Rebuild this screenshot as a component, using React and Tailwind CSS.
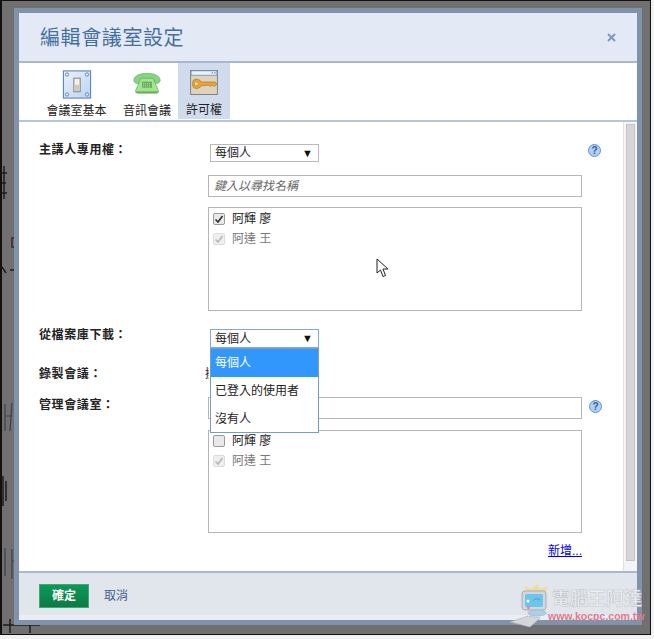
const cjk = "font-['Liberation_Sans','Noto_Sans_CJK_TC',sans-serif]";

const SwitchIcon = () => (
  <svg width="32" height="32" viewBox="0 0 32 32">
    <defs>
      <linearGradient id="sw" x1="0" y1="0" x2="1" y2="1">
        <stop offset="0" stopColor="#eaf2fd" />
        <stop offset="1" stopColor="#bcd3f2" />
      </linearGradient>
    </defs>
    <rect x="1" y="1" width="30" height="30" fill="url(#sw)" stroke="#5b82bd" strokeWidth="1.2" />
    {[[5, 5], [27, 5], [5, 27], [27, 27]].map(([x, y]) => (
      <circle key={x + "-" + y} cx={x} cy={y} r="1.8" fill="#f2f6fc" stroke="#4f7cc0" strokeWidth="1" />
    ))}
    <rect x="12.5" y="9" width="7" height="15" fill="#f3efe6" stroke="#77777a" strokeWidth="1" />
    <rect x="13.5" y="16.5" width="5" height="6.5" fill="#d2c9b4" />
  </svg>
);

const PhoneIcon = () => (
  <svg width="32" height="24" viewBox="0 0 32 24">
    <path d="M1 8 C2 2 9 0.5 16 0.5 C23 0.5 30 2 31 8 C31 11 29 12 26 12 L23 11 L23 7 L9 7 L9 11 L6 12 C3 12 1 11 1 8 Z" fill="#86d67e" stroke="#5fae5a" strokeWidth="0.8" />
    <path d="M9 6 L23 6 L29 20 C29 22 28 23 26 23 L6 23 C4 23 3 22 3 20 Z" fill="#a5e48f" stroke="#5fae5a" strokeWidth="0.8" />
    <rect x="10.5" y="10" width="11" height="7" fill="#5da955" />
    <path d="M11.5 12 H20.5 M11.5 14 H20.5 M11.5 16 H20.5" stroke="#c6eeb4" strokeWidth="0.9" strokeDasharray="1.4 0.8" />
    <path d="M3 21 H29 V23 H3 Z" fill="#62b45a" />
  </svg>
);

const KeyIcon = () => (
  <svg width="32" height="29" viewBox="0 0 32 29">
    <rect x="0.5" y="0.5" width="31" height="28" fill="#ddd3bf" stroke="#77757a" />
    <rect x="1" y="1" width="30" height="5" fill="#eef3fb" stroke="#5b82bd" strokeWidth="0.8" />
    <rect x="25" y="2.5" width="1.4" height="1.6" fill="#5b82bd" />
    <rect x="28" y="2.5" width="1.4" height="1.6" fill="#5b82bd" />
    <path d="M5 11 C9 10 12 12 13 14 L29 14 L31 16.5 L28 19 L25.5 17.5 L23.5 19 L21 17.5 L13 18.5 C11 21 8 22 5 21 C2 20 2 12 5 11 Z" fill="#e6a63d" stroke="#a8741f" strokeWidth="0.8" />
    <ellipse cx="7" cy="16" rx="2.4" ry="2.4" fill="#f6d98f" stroke="#a8741f" strokeWidth="0.6" />
  </svg>
);

const HelpIcon = () => (
  <div className="w-[13px] h-[13px] rounded-full border border-[#5c92d6] bg-[#b4cff2] flex items-center justify-center text-[10px] leading-none font-bold text-[#2f5f9e] font-['Liberation_Sans',sans-serif]">
    ?
  </div>
);

const Select = ({ focused }) => (
  <div className={`ml-[2px] w-[109px] flex items-center justify-between pl-[4px] pr-[5px] bg-white border text-[12px] text-[#222] ${focused ? "h-[19px] border-[#7fa8dc]" : "h-[18px] border-[#b9b9b9]"}`}>
    <span>每個人</span>
    <span className="text-[11px] leading-none text-[#111]">▼</span>
  </div>
);

const Member = ({ name, checked, disabled }) => (
  <div className="flex items-center h-[20px] gap-[7px]">
    <span className={`w-[12px] h-[12px] rounded-[2px] border flex items-center justify-center ${disabled ? "border-[#dcdcdc] bg-[#efefef]" : "border-[#9a9a9a] bg-[#e9e9e9]"}`}>
      {checked && (
        <svg width="10" height="10" viewBox="0 0 10 10">
          <path d="M1.5 5.5 L4 8 L8.5 2" fill="none" stroke={disabled ? "#b8b8b8" : "#333"} strokeWidth="1.7" />
        </svg>
      )}
    </span>
    <span className={`text-[12px] ${disabled ? "text-[#777]" : "text-[#222]"}`}>{name}</span>
  </div>
);

const MemberBox = ({ height, first }) => (
  <div className={`w-[374px] ${height} border border-[#b5b5b5] bg-white pl-[4px] ${first ? "pt-[1px]" : ""}`}>
    <Member name="阿輝 廖" checked={first} />
    <Member name="阿達 王" checked disabled />
  </div>
);

const Label = ({ children, up }) => (
  <div className={`w-[169px] shrink-0 text-[12px] leading-[16px] font-bold text-[#222] tracking-[0.6px] ${up ? "-mt-[2px]" : ""}`}>{children}</div>
);

const Cursor = () => (
  <svg className="absolute left-[357px] top-[136px]" width="14" height="20" viewBox="0 0 14 20">
    <path d="M1 1 L1 15 L4.5 12 L7 18.5 L9.5 17.5 L7 11 L12 11 Z" fill="white" stroke="#222" strokeWidth="1" />
  </svg>
);

const Dropdown = () => (
  <div className="absolute left-[191px] top-[226px] w-[109px] h-[85px] bg-white border border-[#7a9cc6] text-[12px] text-[#222] z-10">
    <div className="h-[28px] bg-[#3297fd] text-white flex items-center pl-[4px]">每個人</div>
    <div className="h-[28px] flex items-center pl-[4px]">已登入的使用者</div>
    <div className="h-[27px] flex items-center pl-[4px]">沒有人</div>
  </div>
);

const Watermark = () => (
  <div className="absolute left-[506px] top-[583px] w-[148px] h-[50px] z-20 pointer-events-none">
    <svg className="absolute left-[2px] top-0" width="44" height="46" viewBox="0 0 44 46">
      <path d="M19 9 L16 3 L24 6 L29 1 L32 6 L40 3 L37 10 Z" fill="#f0dc9a" />
      <rect x="14" y="8" width="24" height="19" rx="3" fill="#d3d6da" stroke="#a9adb3" />
      <rect x="17" y="11" width="18" height="13" rx="2" fill="#6cc5ee" />
      <path d="M25 18 Q28 14 32 17" fill="none" stroke="#4f9ac0" />
      <circle cx="20" cy="18" r="1.5" fill="#fff" />
      <path d="M19 23 Q20 31 22 23" fill="#e77ab3" />
      <path d="M2 39 L20 33 L32 35 L22 44 Z" fill="#d3d6da" stroke="#aeb2b8" strokeDasharray="1.5 1" />
      <ellipse cx="29" cy="30" rx="9" ry="3" fill="#a8cfee" stroke="#b8bcc2" />
    </svg>
    <div className="absolute left-[46px] top-[5px] text-[18px] leading-[22px] font-bold text-[#eef0f3] whitespace-nowrap [-webkit-text-stroke:0.5px_#c0c4cb]">電腦王阿達</div>
    <div className="absolute left-[42px] top-[27px] text-[10.5px] leading-[13px] font-bold text-[#e2788c] whitespace-nowrap font-['Liberation_Sans',sans-serif]">www.kocpc.com.tw</div>
  </div>
);

// bits of the page behind the dialog
const Backdrop = () => (
  <svg className="absolute left-0 top-0" width="60" height="635" viewBox="0 0 60 635">
    <g fill="none" stroke="#1c1c1c" strokeWidth="1.5">
      <path d="M2 165 V198 M0 172 H5 M0 182 H4 M0 192 H5" />
      <path d="M0 266 L4 272" />
      <path d="M8 269 H13" />
      <path d="M1 475 V505 M4 480 V500" />
      <path d="M1 624 H38 M8 618 V632 M28 618 V632" />
    </g>
    <path d="M10 237 H13 V246 H10 Z" fill="none" stroke="#43202a" strokeWidth="1.5" />
    <g fill="none" stroke="#3b3f4e" strokeWidth="1.2">
      <path d="M3 403 V430 M10 402 L8 430 M13 404 V428 M4 415 H10" />
      <path d="M3 547 V575 M10 548 V578 M13 548 V572 M10 560 H13" />
    </g>
  </svg>
);

export default function App() {
  return (
    <div className={`relative w-[654px] h-[639px] bg-[#f2f2f2] overflow-hidden ${cjk}`}>
      <div className="relative w-[651px] h-[635px] bg-[#707070] border-t border-r border-b border-l-2 border-[#111] pl-[12px] pt-[7px]">
        <Backdrop />
        <div className="relative w-[628px] h-[617px] border-[5px] border-[#8093ab] flex flex-col bg-white">
          <div className="h-[50px] shrink-0 bg-[#e4eaf5] border-b-2 border-[#a9b8cd] flex items-center justify-between pl-[21px] pr-[21px] pt-[1px]">
            <span className="text-[20px] tracking-[0.6px] text-[#4470a0]">編輯會議室設定</span>
            <svg width="9" height="9" viewBox="0 0 9 9">
              <path d="M1 1 L8 8 M8 1 L1 8" stroke="#7f97bd" strokeWidth="2" />
            </svg>
          </div>

          <div className="h-[59px] shrink-0 border-b-2 border-[#b9c5d6] flex items-stretch pl-[23px] text-[12px] text-[#222]">
            <div className="w-[69px] flex flex-col items-center pt-[7px] mr-[7px]">
              <SwitchIcon />
              <span className="mt-[3px] whitespace-nowrap">會議室基本</span>
            </div>
            <div className="w-[58px] flex flex-col items-center pt-[10px] mr-[2px]">
              <PhoneIcon />
              <span className="mt-[8px] whitespace-nowrap">音訊會議</span>
            </div>
            <div className="w-[52px] mb-[1px] bg-[#d0dcee] flex flex-col items-center pt-[7px]">
              <KeyIcon />
              <span className="mt-[6px] whitespace-nowrap">許可權</span>
            </div>
          </div>

          <div className="relative flex-1 min-h-0 pl-[20px] pt-[22px]">
            <div className="flex">
              <Label up>主講人專用權：</Label>
              <Select />
              <div className="ml-[269px]"><HelpIcon /></div>
            </div>
            <div className="ml-[169px] mt-[13px] w-[374px] h-[22px] border border-[#b5b5b5] flex items-center pl-[5px] text-[12px] italic text-[#666]">鍵入以尋找名稱</div>
            <div className="ml-[169px] mt-[10px]">
              <MemberBox height="h-[104px]" first />
            </div>

            <div className="flex mt-[18px]">
              <Label up>從檔案庫下載：</Label>
              <Select focused />
            </div>
            <div className="flex mt-[18px] text-[12px] leading-[16px]">
              <Label>錄製會議：</Label>
              <span className="-ml-[3px] w-[4px] overflow-hidden whitespace-nowrap text-[#222]">擁有者</span>
            </div>
            <div className="flex mt-[15px]">
              <Label>管理會議室：</Label>
              <div className="w-[374px] h-[22px] border border-[#b5b5b5]" />
              <div className="ml-[7px] mt-[3px]"><HelpIcon /></div>
            </div>
            <div className="ml-[169px] mt-[11px]">
              <MemberBox height="h-[103px]" />
            </div>
            <div className="w-[543px] mt-[10px] text-right text-[12px] leading-[16px]">
              <a className="text-[#0000ee] underline">新增...</a>
            </div>

            <Dropdown />
            <Cursor />

            <div className="absolute right-0 top-0 bottom-0 w-[14px] bg-[#f4f4f4] border-l border-[#e2e2e2]">
              <div className="mt-[2px] mx-[2px] h-[437px] bg-[#d5d5d5] border border-[#c4c4c4]" />
            </div>
          </div>

          <div className="relative h-[49px] shrink-0 bg-[#e1e5ec] border-t-2 border-[#a9b8cd] pl-[20px] pt-[11px]">
            <div className="flex items-center">
              <div className="w-[50px] h-[24px] bg-gradient-to-b from-[#0c9a58] to-[#0c7a45] border border-[#3aa877] text-white text-[12px] font-bold flex items-center justify-center">確定</div>
              <span className="ml-[15px] text-[12px] text-[#3d5f8f]">取消</span>
            </div>
            <div className="absolute left-0 right-0 bottom-0 h-[5px] bg-[#eaeef4]" />
          </div>
        </div>
      </div>
      <Watermark />
    </div>
  );
}
